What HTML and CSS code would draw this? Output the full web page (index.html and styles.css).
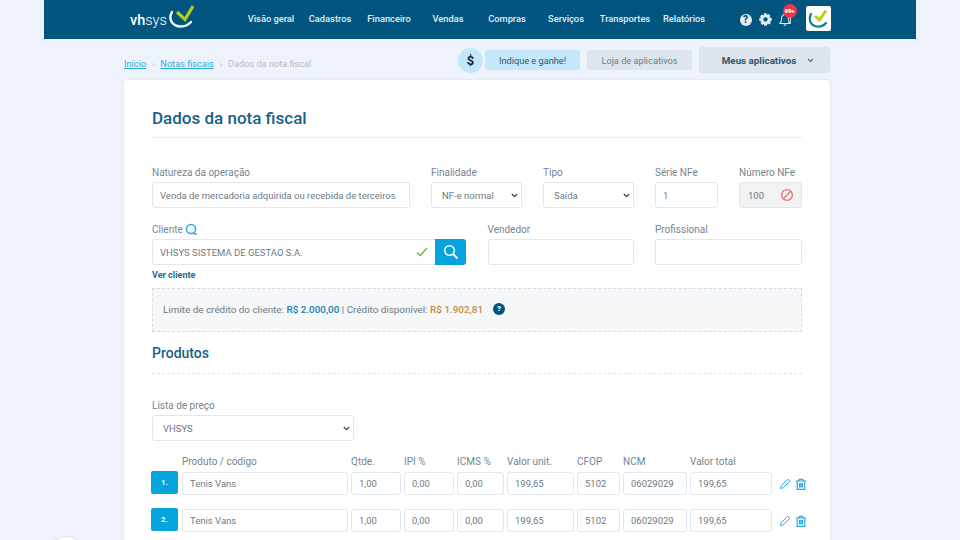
FILE: index.html
```html
<!DOCTYPE html>
<html lang="pt-BR">
<head>
    <meta charset="UTF-8">
    <meta name="viewport" content="width=device-width, initial-scale=1.0">
    <title>Dados da nota fiscal</title>
    <link rel="stylesheet" href="styles.css">
</head>
<body>
    <header class="top-bar">
        <div class="logo">
            <span class="logo-text"><b>vh</b>sys</span>
            <svg class="logo-mark" width="26" height="24" viewBox="0 0 26 24">
                <path d="M4 7C0 14 4 21 12 21.500C17 21.800 20 20 23 17" fill="none" stroke="#fff" stroke-width="2.400" stroke-linecap="round"/>
                <path d="M9 7L17 14.500L25 1" fill="none" stroke="#b5cc18" stroke-width="3.200"/>
            </svg>
        </div>
        <nav class="menu">
            <a>Visão geral</a>
            <a>Cadastros</a>
            <a>Financeiro</a>
            <a>Vendas</a>
            <a>Compras</a>
            <a>Serviços</a>
            <a>Transportes</a>
            <a>Relatórios</a>
        </nav>
        <div class="top-icons">
            <span class="help-icon">?</span>
            <svg width="13" height="13" viewBox="0 0 14 14">
                <path d="M5.700 0.300H8.300L8.700 2.100L10.300 1.200L12.200 3L11.300 4.700L13.700 5.600V8.300L11.900 8.800L12.800 10.400L11 12.300L9.300 11.400L8.400 13.700H5.700L5.200 11.900L3.600 12.800L1.700 11L2.600 9.300L0.300 8.400V5.700L2.100 5.200L1.200 3.600L3 1.700L4.700 2.600Z" fill="#e4edf2"/>
                <circle cx="7" cy="7" r="2.300" fill="#01557e"/>
            </svg>
            <span class="bell">
                <svg width="12" height="14" viewBox="0 0 12 14">
                    <path d="M6 1.500C3.500 1.500 2.600 3.500 2.600 5.500C2.600 8 2 9.500 1 10.500H11C10 9.500 9.400 8 9.400 5.500C9.400 3.500 8.500 1.500 6 1.500Z" fill="none" stroke="#e4edf2" stroke-width="1.100"/>
                    <path d="M4.700 12H7.300" stroke="#e4edf2" stroke-width="1.200"/>
                </svg>
                <span class="badge">99+</span>
                <i class="badge-tail"></i>
            </span>
            <span class="app-tile">
                <svg width="22" height="20" viewBox="0 0 22 20">
                    <path d="M4 5C1 11 4 17 10 17.500C14 17.800 17 16.500 19 14" fill="none" stroke="#0f7f9c" stroke-width="2.200" stroke-linecap="round"/>
                    <path d="M8 7L12.500 11L19 1.500" fill="none" stroke="#b5cc18" stroke-width="2.800"/>
                </svg>
            </span>
        </div>
    </header>

    <main class="page">
        <div class="toolbar">
            <div class="breadcrumb">
                <a>Início</a><span class="sep">&gt;</span><a>Notas fiscais</a><span class="sep">&gt;</span><span class="current">Dados da nota fiscal</span>
            </div>
            <div class="actions">
                <span class="dollar">$</span>
                <button class="btn btn-invite">Indique e ganhe!</button>
                <button class="btn btn-store">Loja de aplicativos</button>
                <button class="btn btn-apps">Meus aplicativos
                    <svg width="7" height="5" viewBox="0 0 7 5"><path d="M1 1L3.500 3.500L6 1" fill="none" stroke="#4d6b7f" stroke-width="1.200"/></svg>
                </button>
            </div>
        </div>

        <section class="card">
            <h1>Dados da nota fiscal</h1>

            <div class="form-row row-first">
                <div class="field">
                    <label>Natureza da operação</label>
                    <input class="control" value="Venda de mercadoria adquirida ou recebida de terceiros">
                </div>
                <div class="field">
                    <label>Finalidade</label>
                    <select class="control"><option>NF-e normal</option></select>
                </div>
                <div class="field">
                    <label>Tipo</label>
                    <select class="control"><option>Saída</option></select>
                </div>
                <div class="field">
                    <label>Série NFe</label>
                    <input class="control" value="1">
                </div>
                <div class="field">
                    <label>Número NFe</label>
                    <div class="control disabled">
                        <span>100</span>
                        <svg width="14" height="14" viewBox="0 0 14 14">
                            <circle cx="7" cy="7" r="5.400" fill="none" stroke="#f0707c" stroke-width="1.400"/>
                            <path d="M3.300 10.700L10.700 3.300" stroke="#f0707c" stroke-width="1.400"/>
                        </svg>
                    </div>
                </div>
            </div>

            <div class="form-row row-second">
                <div class="field">
                    <label>Cliente
                        <svg class="label-icon" width="13" height="13" viewBox="0 0 13 13">
                            <circle cx="6" cy="6" r="4.600" fill="none" stroke="#29abe2" stroke-width="1.500"/>
                            <path d="M8.500 10L11.500 11.500" stroke="#29abe2" stroke-width="1.800"/>
                        </svg>
                    </label>
                    <div class="client-group">
                        <div class="control client-input">
                            <span>VHSYS SISTEMA DE GESTAO S.A.</span>
                            <svg width="12" height="10" viewBox="0 0 12 10"><path d="M1 5.500L4.300 8.500L11 1" fill="none" stroke="#66bb44" stroke-width="1.400"/></svg>
                        </div>
                        <button class="search-btn">
                            <svg width="16" height="16" viewBox="0 0 16 16">
                                <circle cx="6.500" cy="6.500" r="4.800" fill="none" stroke="#fff" stroke-width="1.400"/>
                                <path d="M10 10L14.500 14.500" stroke="#fff" stroke-width="2"/>
                            </svg>
                        </button>
                    </div>
                    <a class="see-client">Ver cliente</a>
                </div>
                <div class="field">
                    <label>Vendedor</label>
                    <input class="control">
                </div>
                <div class="field">
                    <label>Profissional</label>
                    <input class="control">
                </div>
            </div>

            <div class="credit-box">
                <span>Limite de crédito do cliente: <b class="limit">R$ 2.000,00</b> | Crédito disponível: <b class="available">R$ 1.902,81</b></span>
                <span class="credit-help">?</span>
            </div>

            <h2>Produtos</h2>

            <div class="field price-list">
                <label>Lista de preço</label>
                <select class="control"><option>VHSYS</option></select>
            </div>

            <div class="items items-head">
                <span></span>
                <label>Produto / código</label>
                <label>Qtde.</label>
                <label>IPI %</label>
                <label>ICMS %</label>
                <label>Valor unit.</label>
                <label>CFOP</label>
                <label>NCM</label>
                <label>Valor total</label>
            </div>
            <div class="items item-row">
                <span class="item-num">1.</span>
                <input class="control" value="Tenis Vans">
                <input class="control" value="1,00">
                <input class="control" value="0,00">
                <input class="control" value="0,00">
                <input class="control" value="199,65">
                <input class="control" value="5102">
                <input class="control" value="06029029">
                <input class="control" value="199,65">
                <div class="item-tools">
                    <svg width="12" height="12" viewBox="0 0 12 12"><path d="M1.500 10.500L2.200 7.700L8.800 1.200L10.800 3.200L4.300 9.800Z" fill="none" stroke="#29abe2" stroke-width="1"/></svg>
                    <svg width="12" height="12" viewBox="0 0 12 12"><path d="M0.800 3H11.200M2.200 3V11.300H9.800V3M3.800 3C3.800 0.600 8.200 0.600 8.200 3M4.600 5V9.500M7.400 5V9.500M6 5V9.500" fill="none" stroke="#29abe2" stroke-width="1.200"/></svg>
                </div>
            </div>
            <div class="items item-row">
                <span class="item-num">2.</span>
                <input class="control" value="Tenis Vans">
                <input class="control" value="1,00">
                <input class="control" value="0,00">
                <input class="control" value="0,00">
                <input class="control" value="199,65">
                <input class="control" value="5102">
                <input class="control" value="06029029">
                <input class="control" value="199,65">
                <div class="item-tools">
                    <svg width="12" height="12" viewBox="0 0 12 12"><path d="M1.500 10.500L2.200 7.700L8.800 1.200L10.800 3.200L4.300 9.800Z" fill="none" stroke="#29abe2" stroke-width="1"/></svg>
                    <svg width="12" height="12" viewBox="0 0 12 12"><path d="M0.800 3H11.200M2.200 3V11.300H9.800V3M3.800 3C3.800 0.600 8.200 0.600 8.200 3M4.600 5V9.500M7.400 5V9.500M6 5V9.500" fill="none" stroke="#29abe2" stroke-width="1.200"/></svg>
                </div>
            </div>
        </section>
    </main>

    <div class="float-circle"></div>
</body>
</html>
```

FILE: styles.css
```css
html, body {
    margin: 0;
    padding: 0;
    height: 540px;
    overflow: hidden;
    background: #eef3fb;
    font-family: Roboto, "Liberation Sans", sans-serif;
    color: #6d7b85;
}

/* Top bar */
.top-bar {
    display: flex;
    align-items: center;
    width: 872px;
    height: 39px;
    margin: 0 auto;
    background: #01557e;
    color: #e4edf2;
}

.logo {
    display: flex;
    align-items: center;
    gap: 1.500px;
    margin-left: 86px;
    width: 111.500px;
}

.logo-text {
    padding-top: 2px;
    font-size: 14.500px;
    font-weight: 300;
    color: #fff;
}

.logo-text b {
    font-weight: 500;
}

.logo-mark {
    margin-top: -5px;
}

.menu {
    display: grid;
    grid-template-columns: repeat(8, 59px);
    padding-bottom: 2px;
    font-size: 9.300px;
    font-weight: 500;
    text-align: center;
    white-space: nowrap;
}

.top-icons {
    display: flex;
    align-items: center;
    gap: 7px;
    margin-left: 26px;
}

.help-icon {
    width: 12px;
    height: 12px;
    border-radius: 50%;
    background: #e4edf2;
    color: #01557e;
    font-size: 10px;
    font-weight: 900;
    line-height: 12px;
    text-align: center;
}

.bell {
    position: relative;
    display: flex;
    width: 12px;
    margin-right: 8px;
}

.badge {
    position: absolute;
    top: -9px;
    left: 4px;
    width: 14px;
    height: 14px;
    border-radius: 50%;
    background: #f0373f;
    color: #fff;
    font-size: 6px;
    font-weight: 900;
    line-height: 14px;
    text-align: center;
}

.badge-tail {
    position: absolute;
    top: 4px;
    left: 11px;
    width: 1px;
    height: 6px;
    background: #c4d4dd;
}

.app-tile {
    display: flex;
    align-items: center;
    justify-content: center;
    width: 25px;
    height: 25px;
    margin-top: -2px;
    border-radius: 2px;
    background: #fff;
}

/* Page */
.page {
    width: 706px;
    margin-left: 124px;
}

.toolbar {
    display: flex;
    align-items: center;
    justify-content: space-between;
    height: 41px;
}

.breadcrumb {
    font-size: 9.200px;
    color: #b4bcc3;
    padding-top: 8px;
}

.breadcrumb a {
    color: #29abe2;
    text-decoration: underline;
}

.sep {
    margin: 0 5px;
    font-size: 8px;
    color: #cbd3da;
}

.actions {
    display: flex;
    align-items: center;
    padding-top: 1px;
}

.dollar {
    width: 25px;
    height: 25px;
    margin-right: 2px;
    border-radius: 50%;
    background: #c3e6fa;
    color: #12232f;
    font-size: 13px;
    font-weight: 700;
    line-height: 25px;
    text-align: center;
}

.btn {
    border: none;
    border-radius: 3px;
    font-family: inherit;
    font-size: 9.200px;
    padding: 0;
}

.btn-invite {
    width: 95px;
    height: 20px;
    margin-right: 7px;
    background: #c5e7fb;
    color: #2e5568;
}

.btn-store {
    width: 105px;
    height: 20px;
    margin-right: 7px;
    background: #dde6ed;
    color: #657f8f;
}

.btn-apps {
    display: flex;
    align-items: center;
    justify-content: center;
    gap: 11px;
    box-sizing: border-box;
    width: 131px;
    height: 26px;
    padding-left: 7px;
    background: #dce5ec;
    color: #2f566e;
    font-size: 9.800px;
    font-weight: 700;
}

.card {
    height: 480px;
    padding: 26px 28px 0;
    border-radius: 4px;
    background: #fff;
    box-shadow: 0 0 3px rgba(120, 140, 160, 0.18);
}

h1 {
    margin: 0;
    padding-bottom: 7px;
    border-bottom: 1px solid #e9edf0;
    color: #17628c;
    font-size: 17px;
    font-weight: 500;
    line-height: 24px;
}

h2 {
    margin: 11px 0 0;
    padding-bottom: 10px;
    border-bottom: 1px dashed #dfe4e8;
    color: #17628c;
    font-size: 14px;
    font-weight: 500;
    line-height: 20px;
}

label {
    display: block;
    height: 12px;
    margin-bottom: 4px;
    font-size: 10px;
    line-height: 14px;
    color: #76858f;
    white-space: nowrap;
}

.label-icon {
    vertical-align: -3px;
}

.form-row {
    display: grid;
    gap: 21px;
}

.row-first {
    grid-template-columns: 258px 91px 91px 63px 63px;
    margin-top: 28px;
}

.row-second {
    grid-template-columns: 314px 146px 147px;
    column-gap: 21.500px;
    margin-top: 15px;
}

.field {
    display: flex;
    flex-direction: column;
    min-width: 0;
}

.control {
    box-sizing: border-box;
    width: 100%;
    height: 26px;
    padding: 0 7px;
    border: 1.500px solid #e1e7ec;
    border-radius: 3px;
    background: #fff;
    color: #6d7b85;
    font-family: inherit;
    font-size: 9.500px;
    outline: none;
}

select.control {
    appearance: none;
    padding-left: 10px;
    background: #fff url("data:image/svg+xml,%3Csvg xmlns='http://www.w3.org/2000/svg' width='7' height='5'%3E%3Cpath d='M.8 1l2.700 2.700L6.200 1' fill='none' stroke='%23444' stroke-width='1.300'/%3E%3C/svg%3E") no-repeat right 3px center;
}

.disabled {
    display: flex;
    align-items: center;
    justify-content: space-between;
    padding-left: 8px;
    background: #f1f2f4;
}

.client-group {
    display: flex;
}

.client-input {
    display: flex;
    align-items: center;
    justify-content: space-between;
    flex: 1;
    border-right: none;
    border-radius: 3px 0 0 3px;
}

.search-btn {
    display: flex;
    align-items: center;
    justify-content: center;
    width: 31px;
    height: 26px;
    padding: 0;
    border: none;
    border-radius: 0 3px 3px 0;
    background: #05a4dc;
}

.see-client {
    margin-top: 5px;
    color: #1a6a92;
    font-size: 9px;
    font-weight: 700;
    line-height: 11px;
}

.credit-box {
    display: flex;
    align-items: center;
    gap: 10px;
    box-sizing: border-box;
    height: 44px;
    margin-top: 7px;
    padding: 0 10px 2px;
    border: 1px dashed #d8dee3;
    background: #f5f7f9;
    font-size: 9.900px;
}

.limit {
    color: #2181b5;
    font-weight: 500;
}

.available {
    color: #c58a43;
    font-weight: 500;
}

.credit-help {
    width: 12px;
    height: 12px;
    border-radius: 50%;
    background: #01557e;
    color: #fff;
    font-size: 8px;
    font-weight: 900;
    line-height: 12px;
    text-align: center;
}

.price-list {
    width: 202px;
    margin-top: 25px;
}

/* Product rows */
.items {
    display: grid;
    grid-template-columns: 28px 166px 50px 50px 47px 67px 43px 64px 82px auto;
    column-gap: 3px;
    margin-left: -1px;
}

.items-head {
    margin-top: 14px;
}

.items-head label {
    margin-bottom: 5px;
}

.item-row {
    align-items: start;
    margin-bottom: 14px;
}

.item-row .control {
    height: 23px;
}

.item-num {
    width: 27px;
    height: 23px;
    margin-top: -1px;
    border-radius: 2px;
    background: #05a4dc;
    color: #e4f5fb;
    font-size: 8px;
    font-weight: 700;
    line-height: 23px;
    text-align: center;
}

.item-tools {
    display: flex;
    gap: 4px;
    margin-left: 4px;
    padding-top: 6px;
}

.float-circle {
    position: absolute;
    left: 50px;
    top: 537px;
    width: 33px;
    height: 33px;
    border-radius: 50%;
    background: #fff;
    box-shadow: 0 0 3px rgba(120, 140, 160, 0.3);
}
```
